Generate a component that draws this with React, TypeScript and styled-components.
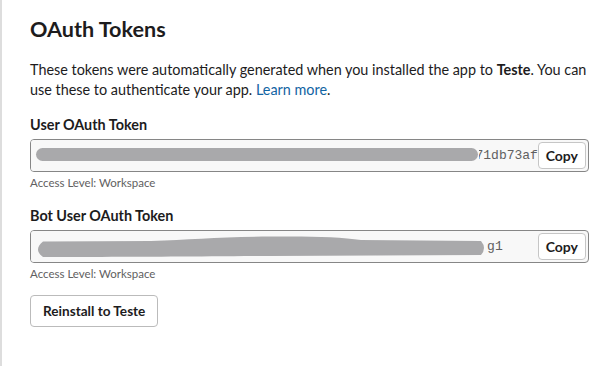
import { createGlobalStyle, styled } from 'styled-components';

const GlobalStyle = createGlobalStyle`
  html, body {
    margin: 0;
    padding: 0;
    background: #fff;
  }
  body {
    font-family: Lato, "Open Sans", sans-serif;
    color: #1d1c1d;
  }
`;

const Page = styled.div`
  min-height: 366px;
  box-sizing: border-box;
  border-left: 2px solid #dddddd;
  padding: 14px 25px 0 28px;
`;

const Title = styled.h2`
  margin: 0;
  font-size: 21.6px;
  font-weight: 700;
  line-height: 30px;
`;

const Intro = styled.p`
  margin: 16px 0 0;
  font-size: 14.4px;
  line-height: 20px;
  a {
    color: #1264a3;
    text-decoration: none;
  }
  b {
    font-weight: 700;
  }
`;

const Field = styled.div<{ $gap: number }>`
  margin-top: ${(p) => p.$gap}px;
  display: flex;
  flex-direction: column;
`;

const Label = styled.label`
  font-size: 14.4px;
  font-weight: 700;
  line-height: 22px;
  margin-bottom: 3px;
`;

const TokenBox = styled.div`
  position: relative;
  display: flex;
  align-items: center;
  height: 33px;
  box-sizing: border-box;
  border: 1px solid #868686;
  border-radius: 4px;
  background: #f8f8f8;
  padding: 0 2px 0 0;
  overflow: hidden;
`;

const TokenText = styled.div<{ $pad: number }>`
  flex: 1;
  text-align: right;
  margin-right: ${(p) => -p.$pad}px;
  font-family: "Liberation Mono", monospace;
  font-size: 13px;
  color: #616061;
  white-space: nowrap;
  overflow: hidden;
`;

const Redact = styled.svg`
  position: absolute;
  left: 0;
  top: 0;
`;

const CopyButton = styled.button`
  position: relative;
  height: 27px;
  padding: 0 7px;
  background: #fff;
  border: 1px solid #c6c6c6;
  border-radius: 4px;
  font-family: Lato, sans-serif;
  font-size: 14px;
  font-weight: 700;
  color: #1d1c1d;
`;

const Note = styled.div`
  margin-top: 4px;
  font-size: 11.5px;
  color: #616061;
  line-height: 14px;
`;

const Reinstall = styled.button`
  margin-top: 14px;
  height: 32px;
  padding: 0 12px;
  background: #fff;
  border: 1px solid #bbbbbb;
  border-radius: 4px;
  font-family: Lato, sans-serif;
  font-size: 13.6px;
  font-weight: 700;
  color: #1d1c1d;
`;

export default function App() {
  return (
    <>
      <GlobalStyle />
      <Page>
        <Title>OAuth Tokens</Title>
        <Intro>
          These tokens were automatically generated when you installed the app to <b>Teste</b>. You can use
          these to authenticate your app. <a href="#">Learn more</a>.
        </Intro>

        <Field $gap={14}>
          <Label>User OAuth Token</Label>
          <TokenBox>
            <TokenText $pad={8}>xoxp-0000000000000071db73afe</TokenText>
            <Redact width="448" height="31" viewBox="0 0 448 31">
              <rect x="0" y="0" width="448" height="31" fill="#f8f8f8" />
              <rect x="5" y="8" width="442" height="13" rx="6.5" fill="#a9a9ab" />
            </Redact>
            <CopyButton>Copy</CopyButton>
          </TokenBox>
          <Note>Access Level: Workspace</Note>
        </Field>

        <Field $gap={15}>
          <Label>Bot User OAuth Token</Label>
          <TokenBox>
            <TokenText $pad={-35}>xoxb-00000000000000000000g1</TokenText>
            <Redact width="456" height="31" viewBox="0 0 456 31">
              <rect x="0" y="0" width="456" height="31" fill="#f8f8f8" />
              <path
                d="M12 10.5 L120 10 C160 8.5 190 6 240 5.5 C280 5 310 6 330 9 L450 10 Q456 17 450 24 L240 25 C170 25.5 120 26 60 26 L12 26 Q2 18.5 12 10.5 Z"
                fill="#a9a9ab"
              />
            </Redact>
            <CopyButton>Copy</CopyButton>
          </TokenBox>
          <Note>Access Level: Workspace</Note>
        </Field>

        <Reinstall>Reinstall to Teste</Reinstall>
      </Page>
    </>
  );
}
